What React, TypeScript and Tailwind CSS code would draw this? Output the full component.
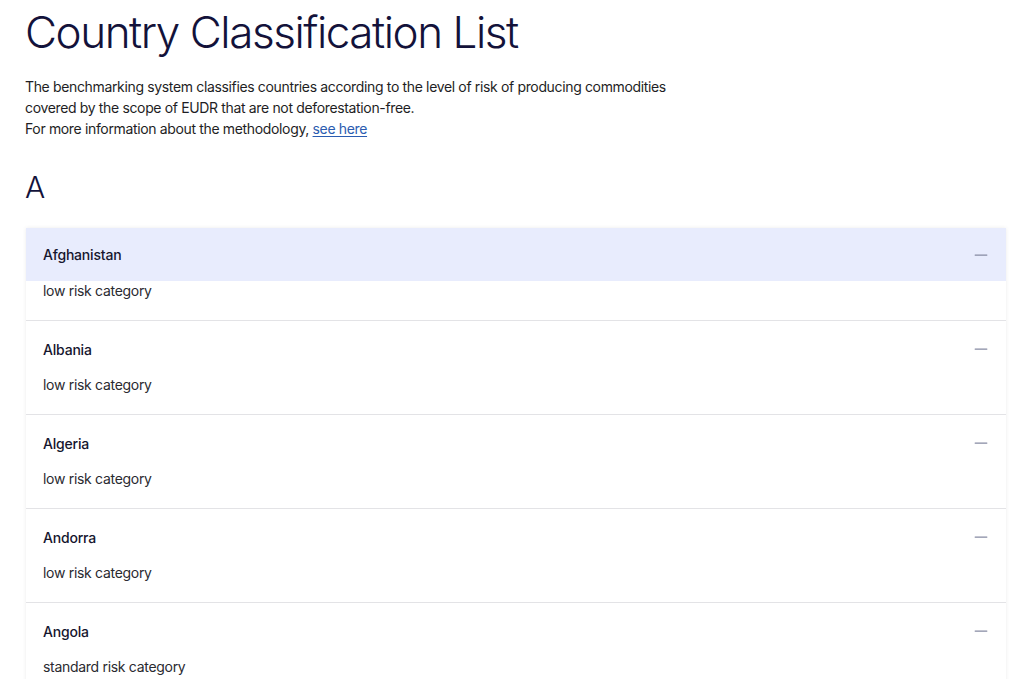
import { Minus } from 'lucide-react'

const countries = [
  { name: 'Afghanistan', risk: 'low risk category', active: true },
  { name: 'Albania', risk: 'low risk category' },
  { name: 'Algeria', risk: 'low risk category' },
  { name: 'Andorra', risk: 'low risk category' },
  { name: 'Angola', risk: 'standard risk category' },
]

export default function App() {
  return (
    <div className="min-h-screen bg-white px-[25px] pt-[6px] font-['Inter',sans-serif] text-[#1c1c1c]">
      <h1 className="text-[44px] font-light leading-[52px] tracking-[-1.45px] text-[#13123a]">
        Country Classification List
      </h1>

      <div className="mt-[18px] max-w-[660px] text-[14px] leading-[21px] tracking-[-0.35px] text-[#1e1e24]">
        <p>
          The benchmarking system classifies countries according to the level of risk of producing commodities
          covered by the scope of EUDR that are not deforestation-free.
        </p>
        <p>
          For more information about the methodology,{' '}
          <a href="#" className="text-[#2b5cb0] underline underline-offset-2">
            see here
          </a>
        </p>
      </div>

      <h2 className="mt-[30px] text-[30px] font-light leading-[36px] text-[#13123a]">A</h2>

      <div className="mt-[23px] ml-[1px] w-[980px] bg-white shadow-[0_0_4px_rgba(0,0,0,0.08)]">
        {countries.map((c, i) => (
          <div key={c.name} className={i > 0 ? 'border-t border-[#e3e3e6]' : ''}>
            <div
              className={`flex items-center justify-between pl-[17px] pr-[15px] ${
                c.active ? 'h-[53px] bg-[#e8ecfd]' : 'h-[54px] pt-[2px]'
              }`}
            >
              <span className="text-[14px] font-medium tracking-[-0.2px] text-[#16162e]">{c.name}</span>
              <Minus size={20} strokeWidth={1.5} className="text-[#858aa2]" />
            </div>
            <div className="pl-[17px] pb-[19px] text-[14px] leading-[20px] tracking-[-0.3px] text-[#2a2a30]">
              {c.risk}
            </div>
          </div>
        ))}
      </div>
    </div>
  )
}
